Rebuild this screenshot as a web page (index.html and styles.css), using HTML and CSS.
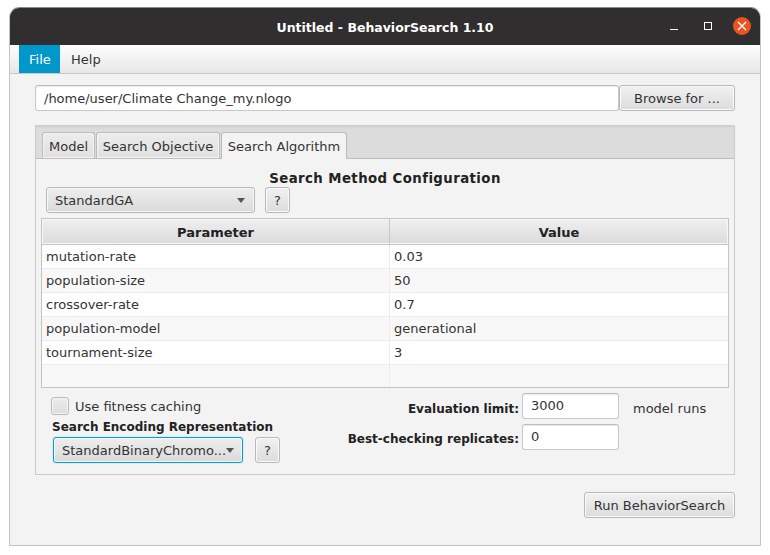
FILE: index.html
```html
<!DOCTYPE html>
<html lang="en">
<head>
<meta charset="utf-8">
<title>Untitled - BehaviorSearch 1.10</title>
<link rel="stylesheet" href="styles.css">
</head>
<body>
<div class="window">
  <header class="titlebar">
    <div class="title">Untitled - BehaviorSearch 1.10</div>
    <div class="wm-controls">
      <svg class="wm-icon" width="10" height="10" viewBox="0 0 10 10"><path d="M1 8.5H9" stroke="#fff" stroke-width="1.2"/></svg>
      <svg class="wm-icon" width="10" height="10" viewBox="0 0 10 10"><rect x="1.5" y="1.5" width="7" height="7" fill="none" stroke="#fff" stroke-width="1"/></svg>
      <div class="wm-close"><svg width="18" height="18" viewBox="0 0 18 18"><path d="M5 5L13 13M13 5L5 13" stroke="#fff" stroke-width="1.3"/></svg></div>
    </div>
  </header>
  <nav class="menubar">
    <div class="menu-item active">File</div>
    <div class="menu-item">Help</div>
  </nav>
  <main class="content">
    <div class="path-row">
      <div class="field path-field">/home/user/Climate Change_my.nlogo</div>
      <button class="btn browse">Browse for ...</button>
    </div>
    <section class="tabpane">
      <div class="tabs">
        <div class="tab tab-model">Model</div>
        <div class="tab tab-objective">Search Objective</div>
        <div class="tab selected">Search Algorithm</div>
      </div>
      <div class="tab-body">
        <h2 class="config-title">Search Method Configuration</h2>
        <div class="method-row">
          <div class="combo method-combo"><span>StandardGA</span><i class="arrow"></i></div>
          <button class="btn help">?</button>
        </div>
        <div class="table">
          <div class="thead"><div class="cell c1">Parameter</div><div class="cell c2">Value</div></div>
          <div class="row"><div class="cell c1">mutation-rate</div><div class="cell c2">0.03</div></div>
          <div class="row odd"><div class="cell c1">population-size</div><div class="cell c2">50</div></div>
          <div class="row"><div class="cell c1">crossover-rate</div><div class="cell c2">0.7</div></div>
          <div class="row odd"><div class="cell c1">population-model</div><div class="cell c2">generational</div></div>
          <div class="row"><div class="cell c1">tournament-size</div><div class="cell c2">3</div></div>
          <div class="row odd last"><div class="cell c1"></div><div class="cell c2"></div></div>
        </div>
        <div class="lower">
          <div class="lower-left">
            <label class="check-row"><span class="checkbox"></span><span>Use fitness caching</span></label>
            <div class="encoding-title">Search Encoding Representation</div>
            <div class="encoding-row">
              <div class="combo encoding-combo focused"><span>StandardBinaryChromo...</span><i class="arrow"></i></div>
              <button class="btn help">?</button>
            </div>
          </div>
          <div class="lower-right">
            <div class="limit-row">
              <span class="limit-label eval">Evaluation limit:</span>
              <div class="field num-field">3000</div>
              <span class="units">model runs</span>
            </div>
            <div class="limit-row second">
              <span class="limit-label">Best-checking replicates:</span>
              <div class="field num-field">0</div>
            </div>
          </div>
        </div>
      </div>
    </section>
    <div class="run-row"><button class="btn run">Run BehaviorSearch</button></div>
  </main>
</div>
</body>
</html>
```

FILE: styles.css
```css
* { box-sizing: border-box; }
html, body { margin: 0; height: 100%; background: #fff; }
body {
  padding: 7px 9px 9px;
  font: 13px/16px "DejaVu Sans", sans-serif;
  color: #333;
}
.window {
  width: 752px;
  height: 539px;
  background: #f3f3f3;
  border: 1px solid #c4c4c4;
  border-top-color: #8a8a8a;
  border-radius: 10px 10px 0 0;
  overflow: hidden;
  display: flex;
  flex-direction: column;
}
.titlebar {
  height: 37px;
  flex: none;
  background: #302e2e;
  color: #fff;
  display: flex;
  align-items: center;
  justify-content: center;
  position: relative;
}
.title { font-weight: bold; font-size: 12.5px; margin-top: 3px; }
.wm-controls {
  position: absolute;
  right: 9px;
  top: 9px;
  display: flex;
  align-items: center;
}
.wm-icon { margin-right: 24px; }
.wm-icon + .wm-icon { margin-right: 20px; }
.wm-close {
  width: 18px;
  height: 18px;
  border-radius: 50%;
  background: #e95420;
  display: flex;
}
.menubar {
  height: 29px;
  flex: none;
  padding-left: 9px;
  display: flex;
  background: linear-gradient(#fdfdfd, #e7e7e7);
  border-bottom: 1px solid #c6c6c6;
}
.menu-item { padding: 7px 11px 0; height: 28px; color: #333; }
.menu-item.active { background: #0097cb; color: #fff; width: 41px; padding-left: 10px; }
.content { flex: 1; padding: 11px 25px 0; }
.path-row { display: flex; height: 26px; }
.field {
  background: #fff;
  border: 1px solid #c8c8c8;
  border-top-color: #bdbdbd;
  border-radius: 3px;
  box-shadow: inset 0 1px 1px #eaeaea;
  color: #333;
}
.path-field { width: 584px; padding: 5px 8px 0; }
.btn {
  font: inherit;
  color: #333;
  border: 1px solid #b8b8b8;
  border-radius: 3px;
  background: linear-gradient(#f1f1f1, #dcdcdc);
  box-shadow: inset 0 0 0 1px #fafafa;
  padding: 2px 0 0;
  height: 26px;
}
.browse { width: 116px; }
.tabpane {
  margin-top: 14px;
  height: 350px;
  border: 1px solid #cbcbcb;
  border-top: 0;
  display: flex;
  flex-direction: column;
}
.tabs {
  height: 34px;
  flex: none;
  background: #dcdcdc;
  border-bottom: 1px solid #bdbdbd;
  padding: 7px 0 0 6px;
  display: flex;
  gap: 1px;
  box-shadow: inset 0 3px 2px -1px #cdcdcd;
}
.tab {
  height: 26px;
  padding-top: 6px;
  text-align: center;
  border: 1px solid #bcbcbc;
  border-bottom: 0;
  border-radius: 3px 3px 0 0;
  background: linear-gradient(#ececec, #e0e0e0);
  box-shadow: inset 0 0 0 1px #f4f4f4;
}
.tab-model { width: 53px; }
.tab-objective { width: 124px; }
.tab.selected {
  width: 126px;
  height: 27px;
  background: #f3f3f3;
  box-shadow: none;
  position: relative;
  z-index: 1;
}
.tab-body { flex: 1; padding: 0 5px; }
.config-title {
  margin: 0;
  padding-top: 12px;
  height: 28px;
  font-size: 13.3px;
  line-height: 16px;
  font-weight: bold;
  text-align: center;
  color: #222;
  letter-spacing: 0.42px;
}
.method-row { display: flex; height: 26px; padding-left: 5px; gap: 10px; }
.combo {
  height: 26px;
  padding-top: 2px;
  border: 1px solid #b8b8b8;
  border-radius: 3px;
  background: linear-gradient(#eeeeee, #dadada);
  box-shadow: inset 0 0 0 1px #f6f6f6;
  display: flex;
  align-items: center;
  justify-content: space-between;
}
.method-combo { width: 209px; padding-left: 8px; padding-right: 9px; }
.arrow {
  width: 0;
  height: 0;
  margin-top: -2px;
  border: 4px solid transparent;
  border-top: 5px solid #555;
  border-bottom: 0;
}
.help { width: 25px; }
.table {
  margin-top: 5px;
  height: 170px;
  border: 1px solid #c4c4c4;
  background: #fff;
  display: flex;
  flex-direction: column;
}
.thead, .row { display: flex; flex: none; }
.thead {
  height: 26px;
  background: linear-gradient(#efefef, #dbdbdb);
  border-bottom: 1px solid #c4c4c4;
  font-weight: bold;
  color: #222;
  box-shadow: inset 0 0 0 1px #f6f6f6;
}
.thead .cell { text-align: center; padding-top: 6px; }
.row { height: 24px; border-bottom: 1px solid #ececec; background: #fff; }
.row.odd { background: #f8f8f8; }
.row.last { height: 22px; border-bottom: 0; }
.cell { padding: 4px 4px 0; border-right: 1px solid #ececec; }
.thead .cell { border-right-color: #c8c8c8; }
.c1 { width: 348px; }
.c2 { flex: 1; border-right: 0; }
.lower { display: flex; justify-content: space-between; height: 86px; }
.lower-left { width: 300px; padding-left: 10px; }
.check-row { display: flex; align-items: center; gap: 6px; margin-top: 9px; height: 18px; }
.check-row span + span { margin-top: 2px; }
.checkbox {
  width: 18px;
  height: 18px;
  border: 1px solid #b8b8b8;
  border-radius: 3px;
  background: linear-gradient(#ededed, #dcdcdc);
  box-shadow: inset 0 0 0 1px #f6f6f6;
}
.encoding-title { font-size: 12px; font-weight: bold; color: #222; margin: 4px 0 0 1px; height: 17px; white-space: nowrap; }
.encoding-row { display: flex; gap: 12px; margin: 1px 0 0 2px; }
.encoding-combo { width: 190px; padding-left: 8px; padding-right: 9px; }
.focused { border-color: #039ed3; box-shadow: 0 0 2px #9fdcf2, inset 0 0 0 1px #f6f6f6; }
.lower-right { width: 384px; padding-top: 5px; }
.limit-row { display: flex; align-items: center; height: 26px; }
.limit-row.second { margin-top: 5px; }
.limit-label { width: 174px; text-align: right; font-size: 12px; font-weight: bold; color: #222; white-space: nowrap; margin-top: 4px; }
.limit-label.eval { margin-top: 6px; }
.num-field { width: 97px; height: 26px; margin-left: 3px; padding: 4px 8px 0; }
.units { margin-left: 14px; margin-top: 5px; white-space: nowrap; }
.run-row { display: flex; justify-content: flex-end; margin-top: 17px; }
.run { width: 151px; }
```
